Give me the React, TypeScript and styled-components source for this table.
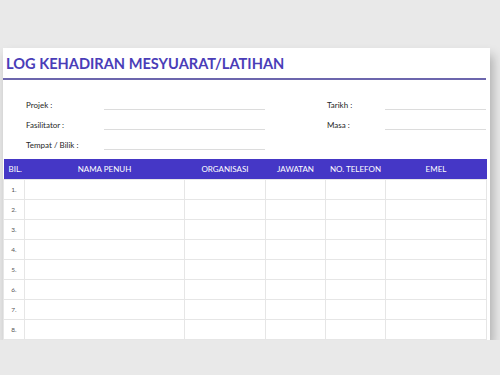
import React from 'react';
import styled, { createGlobalStyle } from 'styled-components';

const GlobalStyle = createGlobalStyle`
  html, body {
    margin: 0;
    padding: 0;
    background: #e9e9e9;
    font-family: 'Lato', 'Open Sans', sans-serif;
  }
`;

const Sheet = styled.div`
  margin: 48px 0 0 3px;
  width: 487px;
  background: #ffffff;
  padding: 0 4px 0 0;
  box-sizing: border-box;
  box-shadow: 3px 7px 10px rgba(0, 0, 0, 0.26);
`;

const Title = styled.h1`
  margin: 0;
  padding: 7px 0 5px 3px;
  font-family: 'Lato', sans-serif;
  font-size: 14.6px;
  font-weight: 700;
  line-height: 18px;
  color: #4a3db8;
  border-bottom: 2px solid #6c66ad;
`;

const FormArea = styled.div`
  display: grid;
  grid-template-columns: 78px 161px 62px 58px 101px;
  grid-auto-rows: 20px;
  padding: 15px 0 4px 23px;
`;

const Label = styled.div<{ $col: number }>`
  grid-column: ${p => p.$col};
  display: flex;
  align-items: center;
  font-size: 8px;
  color: #262626;
`;

const Blank = styled.div<{ $col: number }>`
  grid-column: ${p => p.$col};
  height: 15px;
  box-sizing: border-box;
  border-bottom: 1px solid #dcdcdc;
`;

const Table = styled.table`
  width: 483px;
  border-collapse: collapse;
  table-layout: fixed;
  font-family: 'Lato', sans-serif;
`;

const HeadCell = styled.th<{ $w: number; $left?: boolean }>`
  width: ${p => p.$w}px;
  height: 20px;
  box-sizing: border-box;
  padding: 0 0 0 ${p => (p.$left ? 5 : 0)}px;
  background: #4537c6;
  color: #ffffff;
  font-size: 8px;
  font-weight: 400;
  text-align: ${p => (p.$left ? 'left' : 'center')};
`;

const Cell = styled.td`
  height: 19px;
  border: 1px solid #e6e6e6;
  font-size: 6.5px;
  color: #555;
  padding: 0;
  text-align: center;
`;

const columns = [
  { label: 'BIL.', w: 21, left: true },
  { label: 'NAMA PENUH', w: 160 },
  { label: 'ORGANISASI', w: 81 },
  { label: 'JAWATAN', w: 60 },
  { label: 'NO. TELEFON', w: 60 },
  { label: 'EMEL', w: 101 },
];

export default function App() {
  return (
    <>
      <GlobalStyle />
      <Sheet>
        <Title>LOG KEHADIRAN MESYUARAT/LATIHAN</Title>
        <FormArea>
          <Label $col={1}>Projek :</Label>
          <Blank $col={2} />
          <Label $col={4}>Tarikh :</Label>
          <Blank $col={5} />

          <Label $col={1}>Fasilitator :</Label>
          <Blank $col={2} />
          <Label $col={4}>Masa :</Label>
          <Blank $col={5} />

          <Label $col={1}>Tempat / Bilik :</Label>
          <Blank $col={2} />
        </FormArea>
        <Table>
          <thead>
            <tr>
              {columns.map(c => (
                <HeadCell key={c.label} $w={c.w} $left={c.left}>
                  {c.label}
                </HeadCell>
              ))}
            </tr>
          </thead>
          <tbody>
            {Array.from({ length: 8 }, (_, i) => (
              <tr key={i}>
                <Cell>{i + 1}.</Cell>
                <Cell />
                <Cell />
                <Cell />
                <Cell />
                <Cell />
              </tr>
            ))}
          </tbody>
        </Table>
      </Sheet>
    </>
  );
}
